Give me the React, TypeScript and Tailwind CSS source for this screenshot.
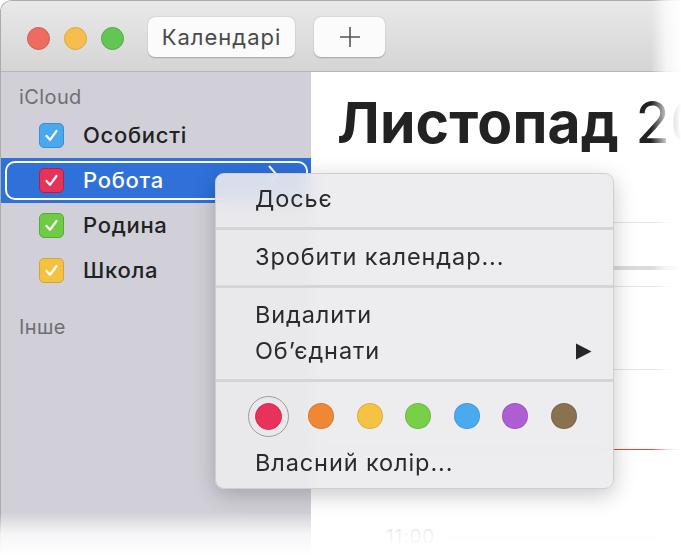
import React from "react";

function Check({ bg, border }: { bg: string; border: string }) {
  return (
    <div
      className="w-[25px] h-[25px] rounded-[5px] flex items-center justify-center border"
      style={{ backgroundColor: bg, borderColor: border }}
    >
      <svg width="17" height="17" viewBox="0 0 17 17">
        <path d="M3.5 9 L7 12.8 L13.5 4" stroke="white" strokeWidth="2.2" fill="none" strokeLinecap="round" strokeLinejoin="round" />
      </svg>
    </div>
  );
}

function Row({ label, bg, border }: { label: string; bg: string; border: string }) {
  return (
    <div className="h-[45px] flex items-center pl-[38px] gap-[19px]">
      <Check bg={bg} border={border} />
      <span className="text-[22px] font-medium text-[#222] tracking-[0.7px]">{label}</span>
    </div>
  );
}

function Sep() {
  return (
    <div className="h-[22px] flex items-center">
      <div className="h-[3px] w-full bg-[#d5d4d7]" />
    </div>
  );
}

function Item({ label, right }: { label: string; right?: React.ReactNode }) {
  return (
    <div className="h-[36px] flex items-center pl-[39px] pr-[21px] text-[23.5px] text-[#2a2a2a] tracking-[0.9px]">
      <span className="flex-1">{label}</span>
      {right}
    </div>
  );
}

const dots = ["#ef8733", "#f5c343", "#78d049", "#4aaaef", "#ad5ed4", "#8a7150"];

export default function App() {
  return (
    <div className="relative w-[681px] h-[556px] overflow-hidden bg-white font-[Inter,'Noto_Sans',sans-serif]">
      <div className="flex flex-col h-full rounded-tl-[12px] border-l border-t border-[#ababab] overflow-hidden">
        {/* toolbar */}
        <div className="h-[71px] shrink-0 flex items-center pt-[2px] bg-gradient-to-b from-[#e9e9e9] to-[#d5d5d5] border-b border-[#b7b7b7]">
          <div className="flex items-center gap-[14px] pl-[26px] mt-[2px]">
            <div className="w-[23px] h-[23px] rounded-full bg-[#ee6b60] border border-[#d85a4f]" />
            <div className="w-[23px] h-[23px] rounded-full bg-[#f6be4f] border border-[#dea63c]" />
            <div className="w-[23px] h-[23px] rounded-full bg-[#62c554] border border-[#4eab42]" />
          </div>
          <div className="ml-[24px] w-[147px] h-[40px] rounded-[7px] bg-[#fbfbfb] shadow-[0_0.5px_1.5px_rgba(0,0,0,0.25)] flex items-center justify-center text-[22px] text-[#4a4a4a] tracking-[1px]">
            Календарі
          </div>
          <div className="ml-[19px] w-[71px] h-[40px] rounded-[7px] bg-[#fbfbfb] shadow-[0_0.5px_1.5px_rgba(0,0,0,0.25)] flex items-center justify-center">
            <svg width="22" height="22" viewBox="0 0 22 22">
              <path d="M11 1 V21 M1 11 H21" stroke="#555" strokeWidth="1.6" />
            </svg>
          </div>
        </div>
        {/* body */}
        <div className="flex flex-1 min-h-0">
          <div className="w-[310px] shrink-0 bg-[#d1d0d8] pt-[9px]">
            <div className="h-[32px] flex items-center pl-[18px] text-[20px] text-[#6f6e74] tracking-[0.4px]">iCloud</div>
            <Row label="Особисті" bg="#4aa8ee" border="#3a8fd2" />
            <div className="relative h-[45px] flex items-center pl-[38px] gap-[19px] bg-[#2f70d9]">
              <Check bg="#e5335a" border="#b8203f" />
              <span className="text-[22px] font-medium text-white tracking-[0.7px]">Робота</span>
              <svg className="absolute left-[266px] top-[6px]" width="12" height="22" viewBox="0 0 12 22">
                <path d="M2 2 L10 11 L2 20" stroke="white" strokeWidth="2" fill="none" />
              </svg>
              <div className="absolute left-[4px] right-[3px] top-[3px] bottom-[3px] rounded-[10px] border-[2.5px] border-white" />
            </div>
            <Row label="Родина" bg="#6fcb44" border="#55ad30" />
            <Row label="Школа" bg="#f4c240" border="#d6a52d" />
            <div className="mt-[22px] h-[24px] flex items-center pl-[18px] text-[20px] text-[#6f6e74] tracking-[0.4px]">Інше</div>
          </div>
          <div className="flex-1 min-w-0 flex flex-col bg-white">
            <div className="h-[150px] shrink-0 pl-[26px] pt-[19px] whitespace-nowrap overflow-hidden text-[#222]">
              <span className="text-[57px] font-bold leading-[64px] tracking-[0.2px]">Листопад</span>
              <span className="text-[57px] font-normal leading-[64px]"> 2019</span>
            </div>
            <div className="h-px bg-[#e4e4e4]" />
            <div className="h-[43px]" />
            <div className="h-[4px] bg-[#dbdbdb]" />
            <div className="h-[16px]" />
            <div className="h-px bg-[#e4e4e4]" />
            <div className="h-[82px]" />
            <div className="h-px bg-[#e4e4e4]" />
            <div className="h-[79px]" />
            <div className="h-px bg-[#f0463a]" />
            <div className="h-[77px]" />
            <div className="flex items-center h-[20px]">
              <span className="w-[124px] text-right text-[19px] text-[#c3c3c3] tracking-[0.8px]">11:00</span>
              <div className="ml-[14px] flex-1 h-px bg-[#e4e4e4]" />
            </div>
          </div>
        </div>
      </div>

      {/* context menu */}
      <div className="absolute left-[215px] top-[173px] w-[399px] rounded-[9px] bg-[#ebeaec]/90 backdrop-blur-sm border border-[#cfced2] shadow-[0_6px_22px_rgba(0,0,0,0.22)] pt-[7px] pb-[3px]">
        <Item label="Досьє" />
        <Sep />
        <Item label="Зробити календар..." />
        <Sep />
        <Item label="Видалити" />
        <Item
          label="Об’єднати"
          right={
            <svg width="17" height="17" viewBox="0 0 17 17">
              <path d="M1 0.5 L16.5 8.5 L1 16.5 Z" fill="#262626" />
            </svg>
          }
        />
        <Sep />
        <div className="h-[50px] flex items-center pl-[32px]">
          <div className="w-[41px] h-[41px] rounded-full border-[1.5px] border-[#9b9b9d] flex items-center justify-center">
            <div className="w-[27px] h-[27px] rounded-full bg-[#e8325a] border border-[#cf2a4f]" />
          </div>
          <div className="flex items-center gap-[22.5px] ml-[19px]">
            {dots.map((c) => (
              <div key={c} className="w-[26px] h-[26px] rounded-full border border-black/10" style={{ backgroundColor: c }} />
            ))}
          </div>
        </div>
        <div className="h-[44px] flex items-center pl-[39px] text-[23.5px] text-[#2a2a2a] tracking-[0.9px]">Власний колір...</div>
      </div>

      {/* fades */}
      <div className="absolute top-0 right-0 bottom-0 w-[30px] bg-gradient-to-r from-white/0 via-white/75 to-white" />
      <div className="absolute left-0 right-0 bottom-0 h-[44px] bg-gradient-to-b from-white/0 via-white/80 to-white" />
    </div>
  );
}
